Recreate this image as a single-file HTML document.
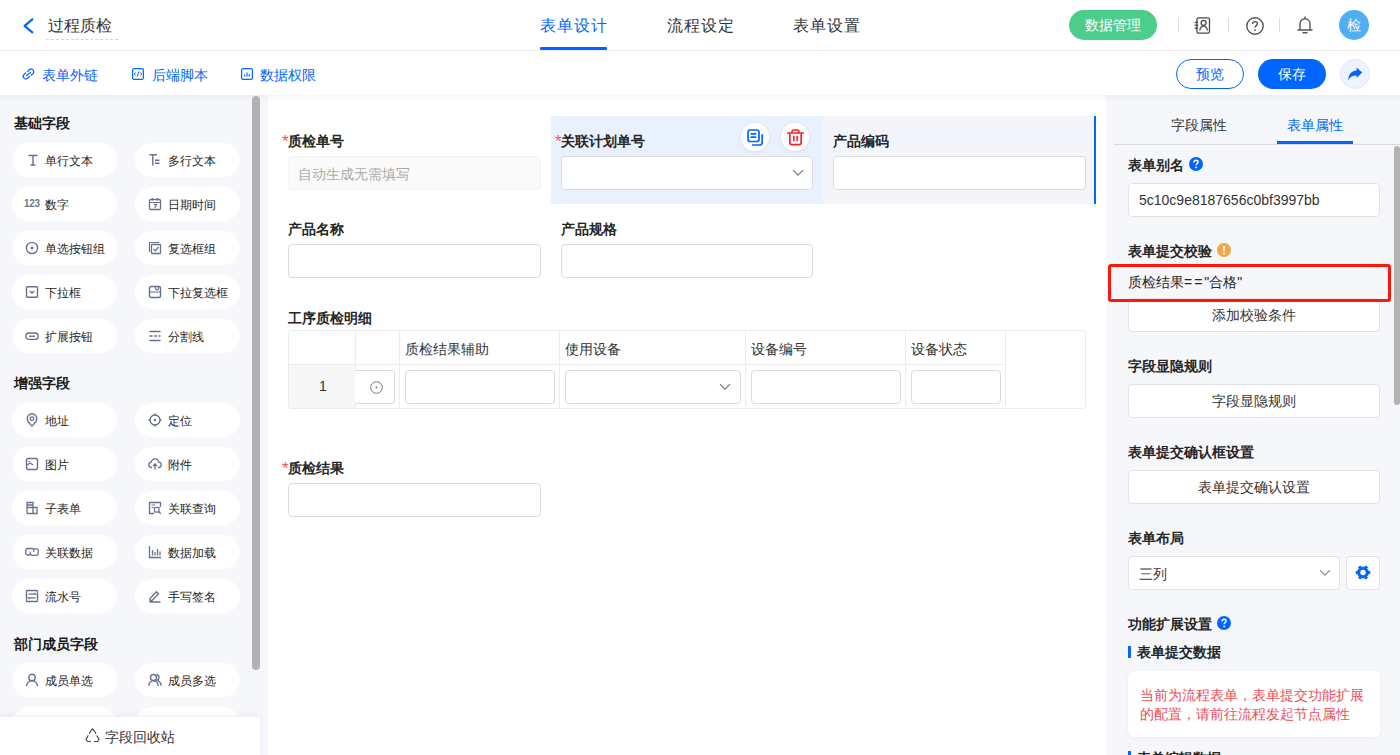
<!DOCTYPE html>
<html><head><meta charset="utf-8">
<style>
*{box-sizing:border-box;margin:0;padding:0}
html,body{width:1400px;height:755px;overflow:hidden;background:#fff;font-family:"Liberation Sans",sans-serif;font-size:14px;color:#333}
.a{position:absolute;white-space:nowrap}
.t14{font-size:14px;line-height:20px}
.t16{font-size:16px;line-height:20px}
.t12{font-size:12px;line-height:20px}
.b{font-weight:bold}
svg{position:absolute;overflow:visible}
.chip{position:absolute;width:105px;height:34px;border-radius:17px;background:#fff}
.chip span{position:absolute;left:33px;top:8px;font-size:12px;line-height:20px;color:#262626}
.chip svg{left:12px;top:10px}
.sect{position:absolute;left:14px;font-size:14px;line-height:20px;font-weight:bold;color:#1a1a1a}
.lbl{position:absolute;font-size:14px;line-height:20px;font-weight:bold;color:#262626}
.req{color:#f0555a;font-weight:normal;font-size:17px;display:inline-block;width:6px;line-height:14px;vertical-align:top;margin-top:4px}
.inp{position:absolute;height:34px;border:1px solid #dcdcdc;border-radius:4px;background:#fff}
.rlbl{position:absolute;left:1128px;font-size:14px;line-height:20px;font-weight:bold;color:#262626}
.rbtn{position:absolute;left:1128px;width:252px;height:34px;border:1px solid #e3e3e3;border-radius:4px;background:#fff;text-align:center;font-size:14px;line-height:32px;color:#333}
</style></head>
<body>
<!-- HEADER -->
<div class="a" style="left:0;top:0;width:1400px;height:50px;background:#fff;border-bottom:1px solid #ebebeb;height:51px"></div>
<svg style="left:23px;top:18px" width="11" height="16" viewBox="0 0 11 16"><path d="M9.3 1.3 L1.6 7.8 L9.3 14.3" fill="none" stroke="#0066ff" stroke-width="2.2" stroke-linecap="round" stroke-linejoin="round"/></svg>
<div class="a t16" style="left:48px;top:16px;color:#333">过程质检</div>
<div class="a" style="left:46px;top:39px;width:72px;border-top:1px dashed #d6d6d6"></div>

<div class="a t16" style="left:540px;top:16px;color:#0066ff;letter-spacing:0.9px">表单设计</div>
<div class="a" style="left:540px;top:47px;width:67px;height:3px;background:#0066ff;border-radius:1px"></div>
<div class="a t16" style="left:667px;top:16px;color:#333;letter-spacing:0.9px">流程设定</div>
<div class="a t16" style="left:793px;top:16px;color:#333;letter-spacing:0.9px">表单设置</div>

<div class="a" style="left:1069px;top:10px;width:88px;height:30px;border-radius:15px;background:#4ccd8c;color:#fff;text-align:center;line-height:30px;font-size:14px">数据管理</div>
<div class="a" style="left:1178px;top:18px;width:1px;height:14px;background:#dedede"></div>
<div class="a" style="left:1228px;top:18px;width:1px;height:14px;background:#dedede"></div>
<div class="a" style="left:1279px;top:18px;width:1px;height:14px;background:#dedede"></div>
<!-- contact icon -->
<svg style="left:1194px;top:17px" width="18" height="17" viewBox="0 0 18 17"><rect x="2.9" y="0.8" width="12.6" height="15.4" rx="1.6" fill="none" stroke="#4a4a4a" stroke-width="1.3"/><circle cx="9.6" cy="5.8" r="2.5" fill="none" stroke="#4a4a4a" stroke-width="1.3"/><path d="M5.8 13.5C6.2 10.6 7.8 9.2 9.6 9.2C11.4 9.2 13 10.6 13.4 13.5" fill="none" stroke="#4a4a4a" stroke-width="1.3"/><path d="M0.6 5.3H4.2M0.6 8.2H4.2M0.6 11.2H4.2" stroke="#4a4a4a" stroke-width="1.2"/></svg>
<!-- help -->
<svg style="left:1246px;top:17px" width="18" height="18" viewBox="0 0 18 18"><circle cx="9" cy="9" r="8.2" fill="none" stroke="#555" stroke-width="1.4"/><path d="M6.6 7 C6.6 5.3 7.8 4.6 9 4.6 C10.3 4.6 11.4 5.4 11.4 6.8 C11.4 8.6 9 8.6 9 10.6" fill="none" stroke="#555" stroke-width="1.4"/><circle cx="9" cy="13.2" r="0.9" fill="#555"/></svg>
<!-- bell -->
<svg style="left:1297px;top:16px" width="16" height="18" viewBox="0 0 16 18"><path d="M8 1 V2.3 M3 13.5 V8 C3 5 5.2 2.8 8 2.8 C10.8 2.8 13 5 13 8 V13.5 M1 14 H15 M6 16.8 H10" fill="none" stroke="#555" stroke-width="1.4" stroke-linecap="round"/></svg>
<div class="a" style="left:1339px;top:10px;width:30px;height:30px;border-radius:15px;background:#50aef2;color:#fff;text-align:center;line-height:30px;font-size:14px">检</div>

<!-- TOOLBAR -->
<svg style="left:22px;top:68px" width="13" height="12" viewBox="0 0 13 12"><path d="M5.5 3.5 L7.3 1.8 C8.3 0.8 10 0.8 11 1.8 C12 2.8 12 4.5 11 5.5 L9.2 7.2 M7.5 8.5 L5.7 10.2 C4.7 11.2 3 11.2 2 10.2 C1 9.2 1 7.5 2 6.5 L3.8 4.8 M4.5 7.5 L8.5 4.5" fill="none" stroke="#0066ff" stroke-width="1.2" stroke-linecap="round"/></svg>
<div class="a t14" style="left:42px;top:65px;color:#0066ff">表单外链</div>
<svg style="left:132px;top:68px" width="12" height="12" viewBox="0 0 12 12"><rect x="0.6" y="0.6" width="10.8" height="10.8" rx="1.5" fill="none" stroke="#0066ff" stroke-width="1.2"/><path d="M3.5 4.5 L2.3 6 L3.5 7.5 M8.5 4.5 L9.7 6 L8.5 7.5 M6.8 3.5 L5.2 8.5" fill="none" stroke="#0066ff" stroke-width="1"/></svg>
<div class="a t14" style="left:152px;top:65px;color:#0066ff">后端脚本</div>
<svg style="left:241px;top:68px" width="12" height="12" viewBox="0 0 12 12"><rect x="0.6" y="0.6" width="10.8" height="10.8" rx="1.5" fill="none" stroke="#0066ff" stroke-width="1.2"/><path d="M3.8 8.5V6.5M6 8.5V4.5M8.2 8.5V6" stroke="#0066ff" stroke-width="1.1"/></svg>
<div class="a t14" style="left:260px;top:65px;color:#0066ff">数据权限</div>

<div class="a" style="left:1176px;top:59px;width:68px;height:30px;border-radius:15px;border:1px solid #0066ff;color:#0066ff;text-align:center;line-height:28px;font-size:14px">预览</div>
<div class="a" style="left:1258px;top:59px;width:68px;height:30px;border-radius:15px;background:#0066ff;color:#fff;text-align:center;line-height:30px;font-size:14px">保存</div>
<div class="a" style="left:1340px;top:59px;width:30px;height:30px;border-radius:15px;background:#eef4ff;border:1px solid #dbe6ff"></div>
<svg style="left:1347px;top:67px" width="16" height="14" viewBox="0 0 16 14"><path d="M15.2 5.6 L9.6 0.5 V3.4 C4.5 3.7 1.3 7.2 1.3 13.2 C3 9.7 5.8 8.4 9.6 8.4 V10.9 Z" fill="#0066ff"/></svg>

<!-- BODY BACKGROUNDS -->
<div class="a" style="left:0;top:95px;width:268px;height:660px;background:#f5f7fb"></div>
<div class="a" style="left:268px;top:95px;width:838px;height:660px;background:#fff"></div>
<div class="a" style="left:1106px;top:95px;width:294px;height:660px;background:#f5f7fb"></div>
<div class="a" style="left:0;top:95px;width:1400px;height:6px;background:linear-gradient(rgba(0,0,0,0.035),rgba(0,0,0,0))"></div>
<!-- LEFT PANEL -->
<div class="sect" style="top:113px">基础字段</div>
<div class="chip" style="left:12px;top:143px"><svg width="14" height="14" viewBox="0 0 14 14" style="left:14px;top:10px"><path d="M2.5 2.5H11.5M7 2.5V12M4.5 12H9.5" fill="none" stroke="#66718f" stroke-width="1.4"/></svg><span>单行文本</span></div>
<div class="chip" style="left:135px;top:143px"><svg width="14" height="14" viewBox="0 0 14 14" style="left:13px;top:10px"><path d="M1.5 1.8H9M4.8 1.8V12.5M7 7.2H11.5M7 10.2H11.5" fill="none" stroke="#66718f" stroke-width="1.4"/></svg><span>多行文本</span></div>
<div class="chip" style="left:12px;top:187px"><div class="a" style="left:12px;top:10px;font-size:10px;line-height:14px;font-weight:bold;color:#6c7796;letter-spacing:-0.3px">123</div><span>数字</span></div>
<div class="chip" style="left:135px;top:187px"><svg width="14" height="14" viewBox="0 0 14 14" style="left:13px;top:10px"><rect x="1.5" y="2.5" width="11" height="10" rx="1.2" fill="none" stroke="#66718f" stroke-width="1.3"/><path d="M1.5 5.5H12.5M4.5 1V3.5M9.5 1V3.5M5.5 7.5H8.5L6.8 11" fill="none" stroke="#66718f" stroke-width="1.2"/></svg><span>日期时间</span></div>
<div class="chip" style="left:12px;top:231px"><svg width="14" height="14" viewBox="0 0 14 14" style="left:13px;top:10px"><circle cx="7" cy="7" r="5.6" fill="none" stroke="#66718f" stroke-width="1.4"/><circle cx="7" cy="7" r="1.5" fill="#6c7796"/></svg><span>单选按钮组</span></div>
<div class="chip" style="left:135px;top:231px"><svg width="14" height="14" viewBox="0 0 14 14" style="left:13px;top:10px"><path d="M1.5 11V1.5H11" fill="none" stroke="#66718f" stroke-width="1.2"/><rect x="3.5" y="3.5" width="9" height="9" rx="0.8" fill="none" stroke="#66718f" stroke-width="1.3"/><path d="M5.5 8L7.3 9.8L10.5 6" fill="none" stroke="#66718f" stroke-width="1.3"/></svg><span>复选框组</span></div>
<div class="chip" style="left:12px;top:275px"><svg width="14" height="14" viewBox="0 0 14 14" style="left:13px;top:10px"><rect x="1.5" y="1.8" width="11" height="10.5" rx="1" fill="none" stroke="#66718f" stroke-width="1.4"/><path d="M4.8 6L7 8L9.2 6" fill="none" stroke="#66718f" stroke-width="1.3"/></svg><span>下拉框</span></div>
<div class="chip" style="left:135px;top:275px"><svg width="14" height="14" viewBox="0 0 14 14" style="left:13px;top:10px"><rect x="1.5" y="1.5" width="11" height="11" rx="1.5" fill="none" stroke="#66718f" stroke-width="1.4"/><path d="M1.5 7H12.5M7.5 1.5V4L9 5L10.5 4V1.5" fill="none" stroke="#66718f" stroke-width="1.2"/></svg><span>下拉复选框</span></div>
<div class="chip" style="left:12px;top:319px"><svg width="14" height="14" viewBox="0 0 14 14" style="left:13px;top:10px"><rect x="0.8" y="4" width="12.4" height="6.4" rx="3.2" fill="none" stroke="#66718f" stroke-width="1.4"/><path d="M4 7.2H10" stroke="#66718f" stroke-width="1.4"/></svg><span>扩展按钮</span></div>
<div class="chip" style="left:135px;top:319px"><svg width="14" height="14" viewBox="0 0 14 14" style="left:13px;top:10px"><path d="M1.5 2.5H12.5M1.5 11.5H12.5" stroke="#66718f" stroke-width="1.3"/><path d="M1.5 7H12.5" stroke="#66718f" stroke-width="1.3" stroke-dasharray="3 1.5"/></svg><span>分割线</span></div>

<div class="sect" style="top:373px">增强字段</div>
<div class="chip" style="left:12px;top:403px"><svg width="14" height="14" viewBox="0 0 14 14" style="left:13px;top:10px"><path d="M7 13C7 13 2.2 8.6 2.2 5.6C2.2 2.9 4.4 0.8 7 0.8C9.6 0.8 11.8 2.9 11.8 5.6C11.8 8.6 7 13 7 13Z" fill="none" stroke="#66718f" stroke-width="1.4"/><circle cx="7" cy="5.6" r="1.8" fill="none" stroke="#66718f" stroke-width="1.3"/></svg><span>地址</span></div>
<div class="chip" style="left:135px;top:403px"><svg width="14" height="14" viewBox="0 0 14 14" style="left:13px;top:10px"><circle cx="7" cy="7" r="5" fill="none" stroke="#66718f" stroke-width="1.4"/><circle cx="7" cy="7" r="1.3" fill="#6c7796"/><path d="M7 0.5V2.5M7 11.5V13.5M0.5 7H2.5M11.5 7H13.5" stroke="#66718f" stroke-width="1.4"/></svg><span>定位</span></div>
<div class="chip" style="left:12px;top:447px"><svg width="14" height="14" viewBox="0 0 14 14" style="left:13px;top:10px"><rect x="1.5" y="1.5" width="11" height="11" rx="1.5" fill="none" stroke="#66718f" stroke-width="1.4"/><path d="M1.5 8.5L5 6L8 8M3.5 4.5H5" fill="none" stroke="#66718f" stroke-width="1.2"/></svg><span>图片</span></div>
<div class="chip" style="left:135px;top:447px"><svg width="14" height="14" viewBox="0 0 14 14" style="left:13px;top:10px"><path d="M4 10.5H3.5C2 10.5 0.8 9.3 0.8 7.8C0.8 6.4 1.8 5.3 3.2 5.1C3.6 3.1 5.2 1.8 7 1.8C9 1.8 10.6 3.3 10.8 5.1C12.2 5.3 13.2 6.4 13.2 7.8C13.2 9.3 12 10.5 10.5 10.5H10M7 12.5V7M5 9L7 7L9 9" fill="none" stroke="#66718f" stroke-width="1.3"/></svg><span>附件</span></div>
<div class="chip" style="left:12px;top:491px"><svg width="14" height="14" viewBox="0 0 14 14" style="left:13px;top:10px"><path d="M2 12.5V1.5H8V6.5M2 6.5H12V12.5H2M8 6.5V12.5M2 4H8" fill="none" stroke="#66718f" stroke-width="1.3"/></svg><span>子表单</span></div>
<div class="chip" style="left:135px;top:491px"><svg width="14" height="14" viewBox="0 0 14 14" style="left:13px;top:10px"><path d="M12.5 6V1.5H1.5V12.5H6" fill="none" stroke="#66718f" stroke-width="1.3"/><path d="M3.5 4H7M3.5 6.5H5.5" stroke="#66718f" stroke-width="1.2"/><rect x="6.5" y="6.5" width="4.5" height="4.5" fill="none" stroke="#66718f" stroke-width="1.2"/><path d="M10.5 10.5L12.8 12.8" stroke="#66718f" stroke-width="1.3"/></svg><span>关联查询</span></div>
<div class="chip" style="left:12px;top:535px"><svg width="14" height="14" viewBox="0 0 14 14" style="left:13px;top:10px"><path d="M5 10H2.5C1.6 10 0.8 9.2 0.8 8.3V5.2C0.8 4.3 1.6 3.5 2.5 3.5H7C7.9 3.5 8.7 4.3 8.7 5.2V7" fill="none" stroke="#66718f" stroke-width="1.3"/><path d="M9 3.8H11.5C12.4 3.8 13.2 4.6 13.2 5.5V8.6C13.2 9.5 12.4 10.3 11.5 10.3H7C6.1 10.3 5.3 9.5 5.3 8.6V6.8" fill="none" stroke="#66718f" stroke-width="1.3"/></svg><span>关联数据</span></div>
<div class="chip" style="left:135px;top:535px"><svg width="14" height="14" viewBox="0 0 14 14" style="left:13px;top:10px"><path d="M1.5 1V12.5H13M4.5 5V10.5M7 7V10.5M9.5 4V10.5M12 6.5V10.5" fill="none" stroke="#66718f" stroke-width="1.3"/></svg><span>数据加载</span></div>
<div class="chip" style="left:12px;top:579px"><svg width="14" height="14" viewBox="0 0 14 14" style="left:13px;top:10px"><rect x="1.5" y="1.5" width="11" height="11" rx="1" fill="none" stroke="#66718f" stroke-width="1.4"/><path d="M3.5 5.2H10.5L9 4M10.5 8.8H3.5L5 10" fill="none" stroke="#66718f" stroke-width="1.2"/></svg><span>流水号</span></div>
<div class="chip" style="left:135px;top:579px"><svg width="14" height="14" viewBox="0 0 14 14" style="left:13px;top:10px"><path d="M2 9.5L8.5 2.8L10.5 4.8L4 11.5H2V9.5ZM1.5 13H12.5" fill="none" stroke="#66718f" stroke-width="1.3"/></svg><span>手写签名</span></div>

<div class="sect" style="top:634px">部门成员字段</div>
<div class="chip" style="left:12px;top:663px"><svg width="14" height="14" viewBox="0 0 14 14" style="left:13px;top:10px"><circle cx="7" cy="4.5" r="3.2" fill="none" stroke="#66718f" stroke-width="1.4"/><path d="M1.5 13.2C1.5 9.8 4 7.8 7 7.8C10 7.8 12.5 9.8 12.5 13.2" fill="none" stroke="#66718f" stroke-width="1.4"/></svg><span>成员单选</span></div>
<div class="chip" style="left:135px;top:663px"><svg width="14" height="14" viewBox="0 0 14 14" style="left:13px;top:10px"><circle cx="5.5" cy="4.5" r="3" fill="none" stroke="#66718f" stroke-width="1.4"/><path d="M0.8 13C0.8 9.8 3 7.8 5.5 7.8C8 7.8 10.2 9.8 10.2 13M8.5 1.5C10 1.7 11 3 11 4.5C11 5.8 10.2 6.8 9.2 7.3C11.3 8 13 10 13.2 12.8" fill="none" stroke="#66718f" stroke-width="1.4"/></svg><span>成员多选</span></div>
<div class="chip" style="left:12px;top:707px"></div>
<div class="chip" style="left:135px;top:707px"></div>

<div class="a" style="left:252px;top:96px;width:8px;height:574px;border-radius:4px;background:#b3b3b3"></div>
<div class="a" style="left:0;top:717px;width:260px;height:38px;background:#fff;box-shadow:0 -2px 6px rgba(0,0,0,0.06)"></div>
<svg style="left:85px;top:728px" width="15" height="15" viewBox="0 0 15 15"><path d="M5.5 3.2L7.5 0.8L9.5 3.2M9.5 3.2L11 5.8M11.8 7.5L14 11.5L12.5 13.5H9M6 13.5H2.5L1 11.5L3.3 7.3M4.2 5.8L5.5 3.2" fill="none" stroke="#444" stroke-width="1.2" stroke-linejoin="round"/></svg>
<div class="a t14" style="left:105px;top:727px;color:#333">字段回收站</div>
<!-- CANVAS -->
<div class="a" style="left:551px;top:116px;width:272px;height:88px;background:#eaf1fe"></div>
<div class="a" style="left:823px;top:116px;width:271px;height:88px;background:#f3f5fa"></div>
<div class="a" style="left:1094px;top:116px;width:2px;height:88px;background:#0066ff"></div>

<div class="lbl" style="left:282px;top:131px"><span class="req">*</span>质检单号</div>
<div class="inp" style="left:288px;top:156px;width:253px;background:#fafafa;border-color:#f4f4f4"></div>
<div class="a t14" style="left:298px;top:164px;color:#ababab">自动生成无需填写</div>

<div class="lbl" style="left:555px;top:131px"><span class="req">*</span>关联计划单号</div>
<div class="inp" style="left:561px;top:156px;width:252px"></div>
<svg style="left:792px;top:169px" width="12" height="8" viewBox="0 0 12 8"><path d="M1 1.2L6 6.2L11 1.2" fill="none" stroke="#777" stroke-width="1.2"/></svg>
<div class="a" style="left:741px;top:123px;width:28px;height:28px;border-radius:14px;background:#fff;box-shadow:0 1px 4px rgba(0,0,0,0.08)"></div>
<svg style="left:747px;top:129px" width="17" height="17" viewBox="0 0 17 17"><rect x="1" y="1" width="11" height="11.5" rx="2.3" fill="none" stroke="#0066ff" stroke-width="1.7"/><path d="M4.2 4.8H8.6M4.2 8.2H8.6" stroke="#0066ff" stroke-width="1.8" stroke-linecap="round"/><path d="M15.2 5.8V13.2C15.2 14.8 14 16 12.4 16H5.6" fill="none" stroke="#0066ff" stroke-width="1.7" stroke-linecap="round"/></svg>
<div class="a" style="left:781px;top:123px;width:28px;height:28px;border-radius:14px;background:#fff;box-shadow:0 1px 4px rgba(0,0,0,0.08)"></div>
<svg style="left:787px;top:129px" width="17" height="17" viewBox="0 0 17 17"><path d="M0.8 4H16.2" stroke="#f5222d" stroke-width="1.7" stroke-linecap="round"/><path d="M5 4V2.8C5 1.8 5.8 1 6.8 1H10.2C11.2 1 12 1.8 12 2.8V4" fill="none" stroke="#f5222d" stroke-width="1.6"/><path d="M2.8 4.5V13.6C2.8 14.8 3.7 15.7 4.9 15.7H12.1C13.3 15.7 14.2 14.8 14.2 13.6V4.5" fill="none" stroke="#f5222d" stroke-width="1.7"/><path d="M6.8 6.8V12.2M10.2 6.8V12.2" stroke="#f5222d" stroke-width="1.7"/></svg>

<div class="lbl" style="left:833px;top:131px">产品编码</div>
<div class="inp" style="left:833px;top:156px;width:253px"></div>

<div class="lbl" style="left:288px;top:219px">产品名称</div>
<div class="inp" style="left:288px;top:244px;width:253px"></div>
<div class="lbl" style="left:561px;top:219px">产品规格</div>
<div class="inp" style="left:561px;top:244px;width:252px"></div>

<div class="lbl" style="left:288px;top:308px">工序质检明细</div>
<!-- table -->
<div class="a" style="left:288px;top:330px;width:798px;height:79px;border:1px solid #ececec;border-radius:3px"></div>
<div class="a" style="left:289px;top:365px;width:66px;height:43px;background:#f7f7f7"></div>
<div class="a" style="left:288px;top:364px;width:717px;height:1px;background:#ececec"></div>
<div class="a" style="left:355px;top:331px;width:1px;height:77px;background:#ececec"></div>
<div class="a" style="left:399px;top:331px;width:1px;height:77px;background:#ececec"></div>
<div class="a" style="left:559px;top:331px;width:1px;height:77px;background:#ececec"></div>
<div class="a" style="left:745px;top:331px;width:1px;height:77px;background:#ececec"></div>
<div class="a" style="left:905px;top:331px;width:1px;height:77px;background:#ececec"></div>
<div class="a" style="left:1005px;top:331px;width:1px;height:77px;background:#ececec"></div>
<div class="a t14" style="left:405px;top:339px;color:#333">质检结果辅助</div>
<div class="a t14" style="left:565px;top:339px;color:#333">使用设备</div>
<div class="a t14" style="left:751px;top:339px;color:#333">设备编号</div>
<div class="a t14" style="left:911px;top:339px;color:#333">设备状态</div>
<div class="a t14" style="left:319px;top:376px;color:#333;font-size:14px">1</div>
<div class="inp" style="left:355px;top:370px;width:40px;border-left:none;border-radius:0 4px 4px 0"></div>
<svg style="left:370px;top:381px" width="13" height="13" viewBox="0 0 13 13"><circle cx="6.5" cy="6.5" r="5.8" fill="none" stroke="#777" stroke-width="1"/><circle cx="6.5" cy="6.5" r="1" fill="#777"/></svg>
<div class="inp" style="left:405px;top:370px;width:150px"></div>
<div class="inp" style="left:565px;top:370px;width:176px"></div>
<svg style="left:719px;top:383px" width="12" height="8" viewBox="0 0 12 8"><path d="M1 1.2L6 6.2L11 1.2" fill="none" stroke="#777" stroke-width="1.2"/></svg>
<div class="inp" style="left:751px;top:370px;width:150px"></div>
<div class="inp" style="left:911px;top:370px;width:90px"></div>

<div class="lbl" style="left:282px;top:458px"><span class="req">*</span>质检结果</div>
<div class="inp" style="left:288px;top:483px;width:253px"></div>
<!-- RIGHT PANEL -->
<div class="a t14" style="left:1171px;top:115px;color:#333">字段属性</div>
<div class="a t14" style="left:1287px;top:115px;color:#0066ff">表单属性</div>
<div class="a" style="left:1114px;top:144px;width:286px;height:1px;background:#dcdcdc"></div>
<div class="a" style="left:1277px;top:141px;width:76px;height:3px;background:#0066ff"></div>
<div class="a" style="left:1394px;top:146px;width:6px;height:259px;border-radius:3px;background:#b3b3b3"></div>

<div class="rlbl" style="top:155px">表单别名</div>
<svg style="left:1189px;top:157px" width="14" height="14" viewBox="0 0 14 14"><circle cx="7" cy="7" r="7" fill="#0066ff"/><path d="M4.9 5.4C4.9 4 5.9 3.3 7 3.3C8.2 3.3 9.1 4 9.1 5.1C9.1 6.5 7.1 6.6 7.1 8.3" fill="none" stroke="#fff" stroke-width="1.5"/><circle cx="7.1" cy="10.4" r="0.9" fill="#fff"/></svg>
<div class="inp" style="left:1128px;top:183px;width:252px;border-color:#e3e3e3"></div>
<div class="a t14" style="left:1139px;top:190px;color:#333">5c10c9e8187656c0bf3997bb</div>

<div class="rlbl" style="top:241px">表单提交校验</div>
<svg style="left:1217px;top:243px" width="14" height="14" viewBox="0 0 14 14"><circle cx="7" cy="7" r="7" fill="#f0a94a"/><path d="M7 3.2V8.3" stroke="#fff" stroke-width="1.7"/><circle cx="7" cy="10.5" r="0.95" fill="#fff"/></svg>
<div class="rbtn" style="top:298px">添加校验条件</div>
<div class="a" style="left:1108px;top:264px;width:283px;height:38px;border:3px solid #ff170d;border-radius:3px"></div>
<div class="a t14" style="left:1128px;top:272px;color:#262626">质检结果<span style="letter-spacing:2px">==</span>"合格"</div>

<div class="rlbl" style="top:356px">字段显隐规则</div>
<div class="rbtn" style="top:384px">字段显隐规则</div>
<div class="rlbl" style="top:442px">表单提交确认框设置</div>
<div class="rbtn" style="top:470px">表单提交确认设置</div>
<div class="rlbl" style="top:528px">表单布局</div>
<div class="inp" style="left:1128px;top:556px;width:212px;border-color:#e3e3e3"></div>
<div class="a t14" style="left:1139px;top:564px;color:#333">三列</div>
<svg style="left:1319px;top:569px" width="12" height="8" viewBox="0 0 12 8"><path d="M1 1.2L6 6.2L11 1.2" fill="none" stroke="#888" stroke-width="1.1"/></svg>
<div class="inp" style="left:1346px;top:556px;width:34px;border-color:#e3e3e3"></div>
<svg style="left:1355px;top:565px" width="16" height="15" viewBox="0 0 16 15"><path d="M12.93 5.30 L13.26 6.29 L14.91 6.40 L14.91 8.60 L13.26 8.71 L12.93 9.70 L12.37 10.67 L11.68 11.45 L12.41 12.94 L10.51 14.04 L9.58 12.66 L8.56 12.87 L7.44 12.87 L6.42 12.66 L5.49 14.04 L3.59 12.94 L4.32 11.45 L3.63 10.67 L3.07 9.70 L2.74 8.71 L1.09 8.60 L1.09 6.40 L2.74 6.29 L3.07 5.30 L3.63 4.33 L4.32 3.55 L3.59 2.06 L5.49 0.96 L6.42 2.34 L7.44 2.13 L8.56 2.13 L9.58 2.34 L10.51 0.96 L12.41 2.06 L11.68 3.55 L12.37 4.33 Z" fill="#0066ff" stroke="#0066ff" stroke-width="1" stroke-linejoin="round"/><circle cx="8" cy="7.5" r="2.7" fill="#fff"/></svg>

<div class="rlbl" style="top:614px">功能扩展设置</div>
<svg style="left:1217px;top:616px" width="14" height="14" viewBox="0 0 14 14"><circle cx="7" cy="7" r="7" fill="#0066ff"/><path d="M4.9 5.4C4.9 4 5.9 3.3 7 3.3C8.2 3.3 9.1 4 9.1 5.1C9.1 6.5 7.1 6.6 7.1 8.3" fill="none" stroke="#fff" stroke-width="1.5"/><circle cx="7.1" cy="10.4" r="0.9" fill="#fff"/></svg>
<div class="a" style="left:1128px;top:646px;width:3px;height:12px;background:#0066ff"></div>
<div class="rlbl" style="left:1137px;top:642px">表单提交数据</div>
<div class="a" style="left:1128px;top:671px;width:252px;height:66px;background:#fff;border-radius:6px;box-shadow:0 1px 6px rgba(0,0,0,0.04)"></div>
<div class="a" style="left:1140px;top:686px;font-size:14px;line-height:19px;color:#eb4d5b;white-space:normal;width:232px">当前为流程表单，表单提交功能扩展的配置，请前往流程发起节点属性</div>
<div class="a" style="left:1128px;top:751px;width:3px;height:12px;background:#0066ff"></div>
<div class="rlbl" style="left:1137px;top:748px">表单编辑数据</div>
</body></html>
